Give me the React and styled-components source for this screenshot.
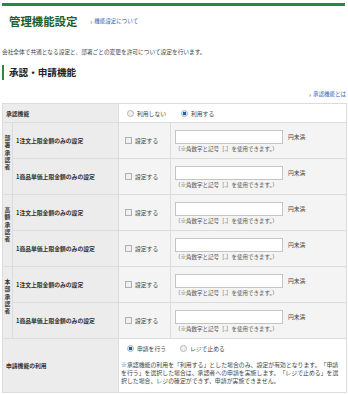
import React from "react";
import styled, { createGlobalStyle } from "styled-components";

const GlobalStyle = createGlobalStyle`
  html, body { margin: 0; padding: 0; background: #fff; }
  body { font-family: "Noto Sans CJK JP", "Noto Sans", sans-serif; color: #333; }
`;

const Page = styled.div`
  width: 348px;
  height: 394px;
  overflow: hidden;
  display: flex;
  flex-direction: column;
`;

const TopBar = styled.div`
  margin: 3px 3px 0 2px;
  height: 3px;
  background: #268a3c;
`;

const TitleRow = styled.div`
  display: flex;
  align-items: center;
  gap: 13px;
  margin-top: 9px;
  padding-left: 9px;
`;

const Title = styled.h1`
  margin: 0;
  font-size: 11.4px;
  line-height: 12px;
  font-weight: 700;
  color: #1d5e2d;
`;

const LinkText = styled.a`
  display: inline-flex;
  align-items: center;
  gap: 2px;
  font-size: 5.5px;
  line-height: 7px;
  color: #2f5fb8;
  text-decoration: none;
`;

const Arrow = styled.span`
  color: #3a9a2e;
  font-weight: 700;
  font-size: 6px;
`;

const Description = styled.p`
  margin: 21px 0 0 2px;
  font-size: 5.7px;
  line-height: 7px;
  color: #444;
`;

const SectionHeading = styled.h2`
  margin: 10px 0 0 2px;
  height: 15px;
  border-left: 2.5px solid #2a8a3a;
  padding-left: 5px;
  font-size: 9.6px;
  line-height: 15px;
  font-weight: 700;
  color: #222;
`;

const RightLinkRow = styled.div`
  display: flex;
  justify-content: flex-end;
  margin: 11px 2px 0 0;
`;

const Table = styled.table`
  margin: 5px 0 0 2px;
  width: 344px;
  border-collapse: collapse;
  table-layout: fixed;
  border: 1px solid #dcdcdc;
`;

const Row = styled.tr`
  height: ${(p) => p.$h}px;
`;

const LabelCell = styled.th`
  background: #ececec;
  border: 1px solid #dcdcdc;
  text-align: left;
  font-weight: 700;
  font-size: 5.8px;
  line-height: 7px;
  color: #333;
  padding: 0 0 0 ${(p) => (p.$pad ?? 3)}px;
  vertical-align: middle;
`;

const GroupCell = styled.th`
  background: #ececec;
  border: 1px solid #dcdcdc;
  padding: 0 0 6px 0;
  vertical-align: middle;
  text-align: center;
`;

const VerticalText = styled.span`
  display: inline-block;
  writing-mode: vertical-rl;
  text-orientation: upright;
  font-size: 5.8px;
  letter-spacing: 1.4px;
  font-weight: 700;
  color: #333;
`;

const DataCell = styled.td`
  background: ${(p) => (p.$white ? "#fff" : "#f4f4f4")};
  border: 1px solid #dcdcdc;
  padding: 0 0 0 ${(p) => (p.$pad ?? 4)}px;
  vertical-align: middle;
  font-size: 5.8px;
  line-height: 7px;
  color: #444;
`;

const Inline = styled.label`
  display: inline-flex;
  align-items: center;
  gap: 3px;
  margin-right: ${(p) => p.$mr ?? 0}px;
  white-space: nowrap;
`;

const RadioDot = styled.span`
  width: 5px;
  height: 5px;
  border-radius: 50%;
  border: 0.8px solid #b5b5b5;
  background: ${(p) => (p.$on ? "radial-gradient(circle, #1f5fb0 0 45%, #dfe6ee 55%)" : "#f1f1f1")};
  flex: none;
`;

const CheckBox = styled.span`
  width: 5px;
  height: 5px;
  border: 0.8px solid #b0b0b0;
  background: #f0f0f0;
  flex: none;
`;

const RadioGroup = styled.div`
  display: flex;
  align-items: center;
  padding-left: ${(p) => p.$indent ?? 0}px;
`;

const InputBlock = styled.div`
  display: flex;
  flex-direction: column;
  gap: 2px;
  padding-top: 1px;
`;

const InputLine = styled.div`
  display: flex;
  align-items: center;
  gap: 5px;
`;

const TextBox = styled.input`
  width: 108px;
  height: 14px;
  box-sizing: border-box;
  border: 1px solid #c4c4c4;
  background: #fff;
  margin: 0;
  padding: 0;
`;

const Hint = styled.div`
  font-size: 5.5px;
  line-height: 7px;
  color: #555;
`;

const Note = styled.p`
  margin: 9px 0 0 0;
  font-size: 5.9px;
  line-height: 8px;
  color: #444;
  white-space: nowrap;
`;

const LastCellInner = styled.div`
  padding: 2px 0 4px;
`;

const groups = [
  { name: "部署承認者" },
  { name: "高額承認者" },
  { name: "本部承認者" },
];

function AmountCells() {
  return (
    <>
      <DataCell $pad={6}>
        <Inline>
          <CheckBox />
          設定する
        </Inline>
      </DataCell>
      <DataCell $pad={4}>
        <InputBlock>
          <InputLine>
            <TextBox type="text" />
            <span>円未満</span>
          </InputLine>
          <Hint>（※角数字と記号［.］を使用できます。）</Hint>
        </InputBlock>
      </DataCell>
    </>
  );
}

export default function App() {
  return (
    <Page>
      <GlobalStyle />
      <TopBar />
      <TitleRow>
        <Title>管理機能設定</Title>
        <LinkText href="#">
          <Arrow>›</Arrow>機能設定について
        </LinkText>
      </TitleRow>
      <Description>
        会社全体で共通となる設定と、部署ごとの変更を許可について設定を行います。
      </Description>
      <SectionHeading>承認・申請機能</SectionHeading>
      <RightLinkRow>
        <LinkText href="#">
          <Arrow>›</Arrow>承認機能とは
        </LinkText>
      </RightLinkRow>
      <Table>
        <colgroup>
          <col style={{ width: 10 }} />
          <col style={{ width: 106 }} />
          <col style={{ width: 52 }} />
          <col style={{ width: 176 }} />
        </colgroup>
        <tbody>
          <Row $h={19}>
            <LabelCell colSpan={2}>承認機能</LabelCell>
            <DataCell colSpan={2} $white $pad={2}>
              <RadioGroup $indent={6}>
                <Inline $mr={15}>
                  <RadioDot />
                  利用しない
                </Inline>
                <Inline>
                  <RadioDot $on />
                  利用する
                </Inline>
              </RadioGroup>
            </DataCell>
          </Row>
          {groups.map((g) => (
            <React.Fragment key={g.name}>
              <Row $h={36}>
                <GroupCell rowSpan={2}>
                  <VerticalText>{g.name}</VerticalText>
                </GroupCell>
                <LabelCell $pad={3}>1注文上限金額のみの設定</LabelCell>
                <AmountCells />
              </Row>
              <Row $h={36}>
                <LabelCell $pad={3}>1商品単価上限金額のみの設定</LabelCell>
                <AmountCells />
              </Row>
            </React.Fragment>
          ))}
          <Row $h={54}>
            <LabelCell colSpan={2}>申請機能の利用</LabelCell>
            <DataCell colSpan={2} $white $pad={2}>
              <LastCellInner>
                <RadioGroup $indent={6}>
                  <Inline $mr={14}>
                    <RadioDot $on />
                    申請を行う
                  </Inline>
                  <Inline>
                    <RadioDot />
                    レジで止める
                  </Inline>
                </RadioGroup>
                <Note>
                  ※承認機能の利用を「利用する」とした場合のみ、設定が有効となります。「申請
                  <br />
                  を行う」を選択した場合は、承認者への申請を実施します。「レジで止める」を選
                  <br />
                  択した場合、レジの確定ができず、申請が実施できません。
                </Note>
              </LastCellInner>
            </DataCell>
          </Row>
        </tbody>
      </Table>
    </Page>
  );
}
